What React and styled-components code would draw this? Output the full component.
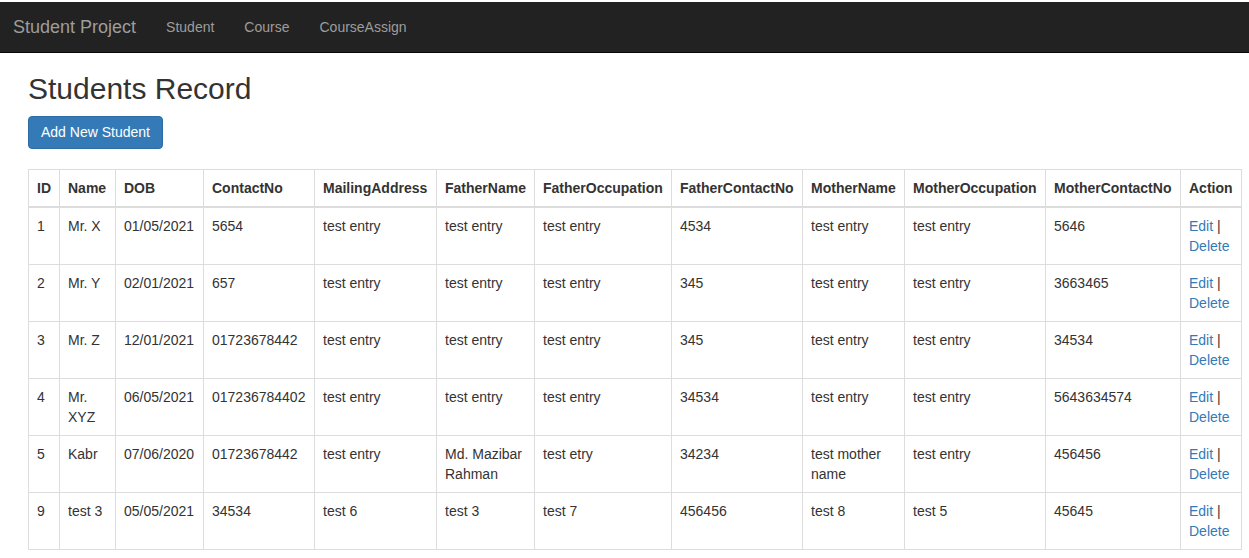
import React from "react";
import styled, { createGlobalStyle } from "styled-components";

const GlobalStyle = createGlobalStyle`
  * { box-sizing: border-box; }
  body {
    margin: 0;
    padding-top: 2px;
    background: #fff;
    font-family: "Liberation Sans", Arial, sans-serif;
    font-size: 14px;
    line-height: 20px;
    color: #333;
  }
`;

const Navbar = styled.nav`
  display: flex;
  align-items: center;
  height: 51px;
  background-color: #222;
  border-bottom: 1px solid #080808;
  padding-left: 13px;
`;

const Brand = styled.a`
  font-size: 18px;
  line-height: 20px;
  color: #9d9d9d;
  text-decoration: none;
  margin-right: 15px;
`;

const NavLink = styled.a`
  font-size: 14px;
  color: #9d9d9d;
  text-decoration: none;
  padding: 15px;
`;

const Content = styled.div`
  padding: 0 28px;
`;

const Title = styled.h2`
  margin: 19px 0 11px;
  font-size: 30px;
  font-weight: 500;
  line-height: 33px;
  color: #333;
`;

const Button = styled.button`
  font-family: inherit;
  font-size: 14px;
  line-height: 19px;
  padding: 6px 12px;
  color: #fff;
  background-color: #337ab7;
  border: 1px solid #2e6da4;
  border-radius: 4px;
  cursor: pointer;
`;

const Table = styled.table`
  margin-top: 20px;
  width: 1213px;
  table-layout: fixed;
  border-collapse: collapse;
  border: 1px solid #ddd;
`;

const Th = styled.th`
  width: ${(p) => p.$w}px;
  padding: 8px;
  text-align: left;
  vertical-align: bottom;
  font-weight: bold;
  border: 1px solid #ddd;
  border-bottom: 2px solid #ddd;
`;

const Td = styled.td`
  padding: 8px;
  vertical-align: top;
  border: 1px solid #ddd;
`;

const Link = styled.a`
  color: #337ab7;
  text-decoration: none;
`;

const columns = [
  ["ID", 31],
  ["Name", 56],
  ["DOB", 88],
  ["ContactNo", 111],
  ["MailingAddress", 122],
  ["FatherName", 98],
  ["FatherOccupation", 137],
  ["FatherContactNo", 131],
  ["MotherName", 102],
  ["MotherOccupation", 141],
  ["MotherContactNo", 135],
  ["Action", 61],
];

const rows = [
  ["1", "Mr. X", "01/05/2021", "5654", "test entry", "test entry", "test entry", "4534", "test entry", "test entry", "5646"],
  ["2", "Mr. Y", "02/01/2021", "657", "test entry", "test entry", "test entry", "345", "test entry", "test entry", "3663465"],
  ["3", "Mr. Z", "12/01/2021", "01723678442", "test entry", "test entry", "test entry", "345", "test entry", "test entry", "34534"],
  ["4", "Mr. XYZ", "06/05/2021", "017236784402", "test entry", "test entry", "test entry", "34534", "test entry", "test entry", "5643634574"],
  ["5", "Kabr", "07/06/2020", "01723678442", "test entry", "Md. Mazibar Rahman", "test etry", "34234", "test mother name", "test entry", "456456"],
  ["9", "test 3", "05/05/2021", "34534", "test 6", "test 3", "test 7", "456456", "test 8", "test 5", "45645"],
];

export default function App() {
  return (
    <>
      <GlobalStyle />
      <Navbar>
        <Brand href="#">Student Project</Brand>
        <NavLink href="#">Student</NavLink>
        <NavLink href="#">Course</NavLink>
        <NavLink href="#">CourseAssign</NavLink>
      </Navbar>
      <Content>
        <Title>Students Record</Title>
        <Button>Add New Student</Button>
        <Table>
          <thead>
            <tr>
              {columns.map(([name, w]) => (
                <Th key={name} $w={w}>{name}</Th>
              ))}
            </tr>
          </thead>
          <tbody>
            {rows.map((r) => (
              <tr key={r[0]}>
                {r.map((cell, i) => (
                  <Td key={i}>{cell}</Td>
                ))}
                <Td>
                  <Link href="#">Edit</Link> | <Link href="#">Delete</Link>
                </Td>
              </tr>
            ))}
          </tbody>
        </Table>
      </Content>
    </>
  );
}
